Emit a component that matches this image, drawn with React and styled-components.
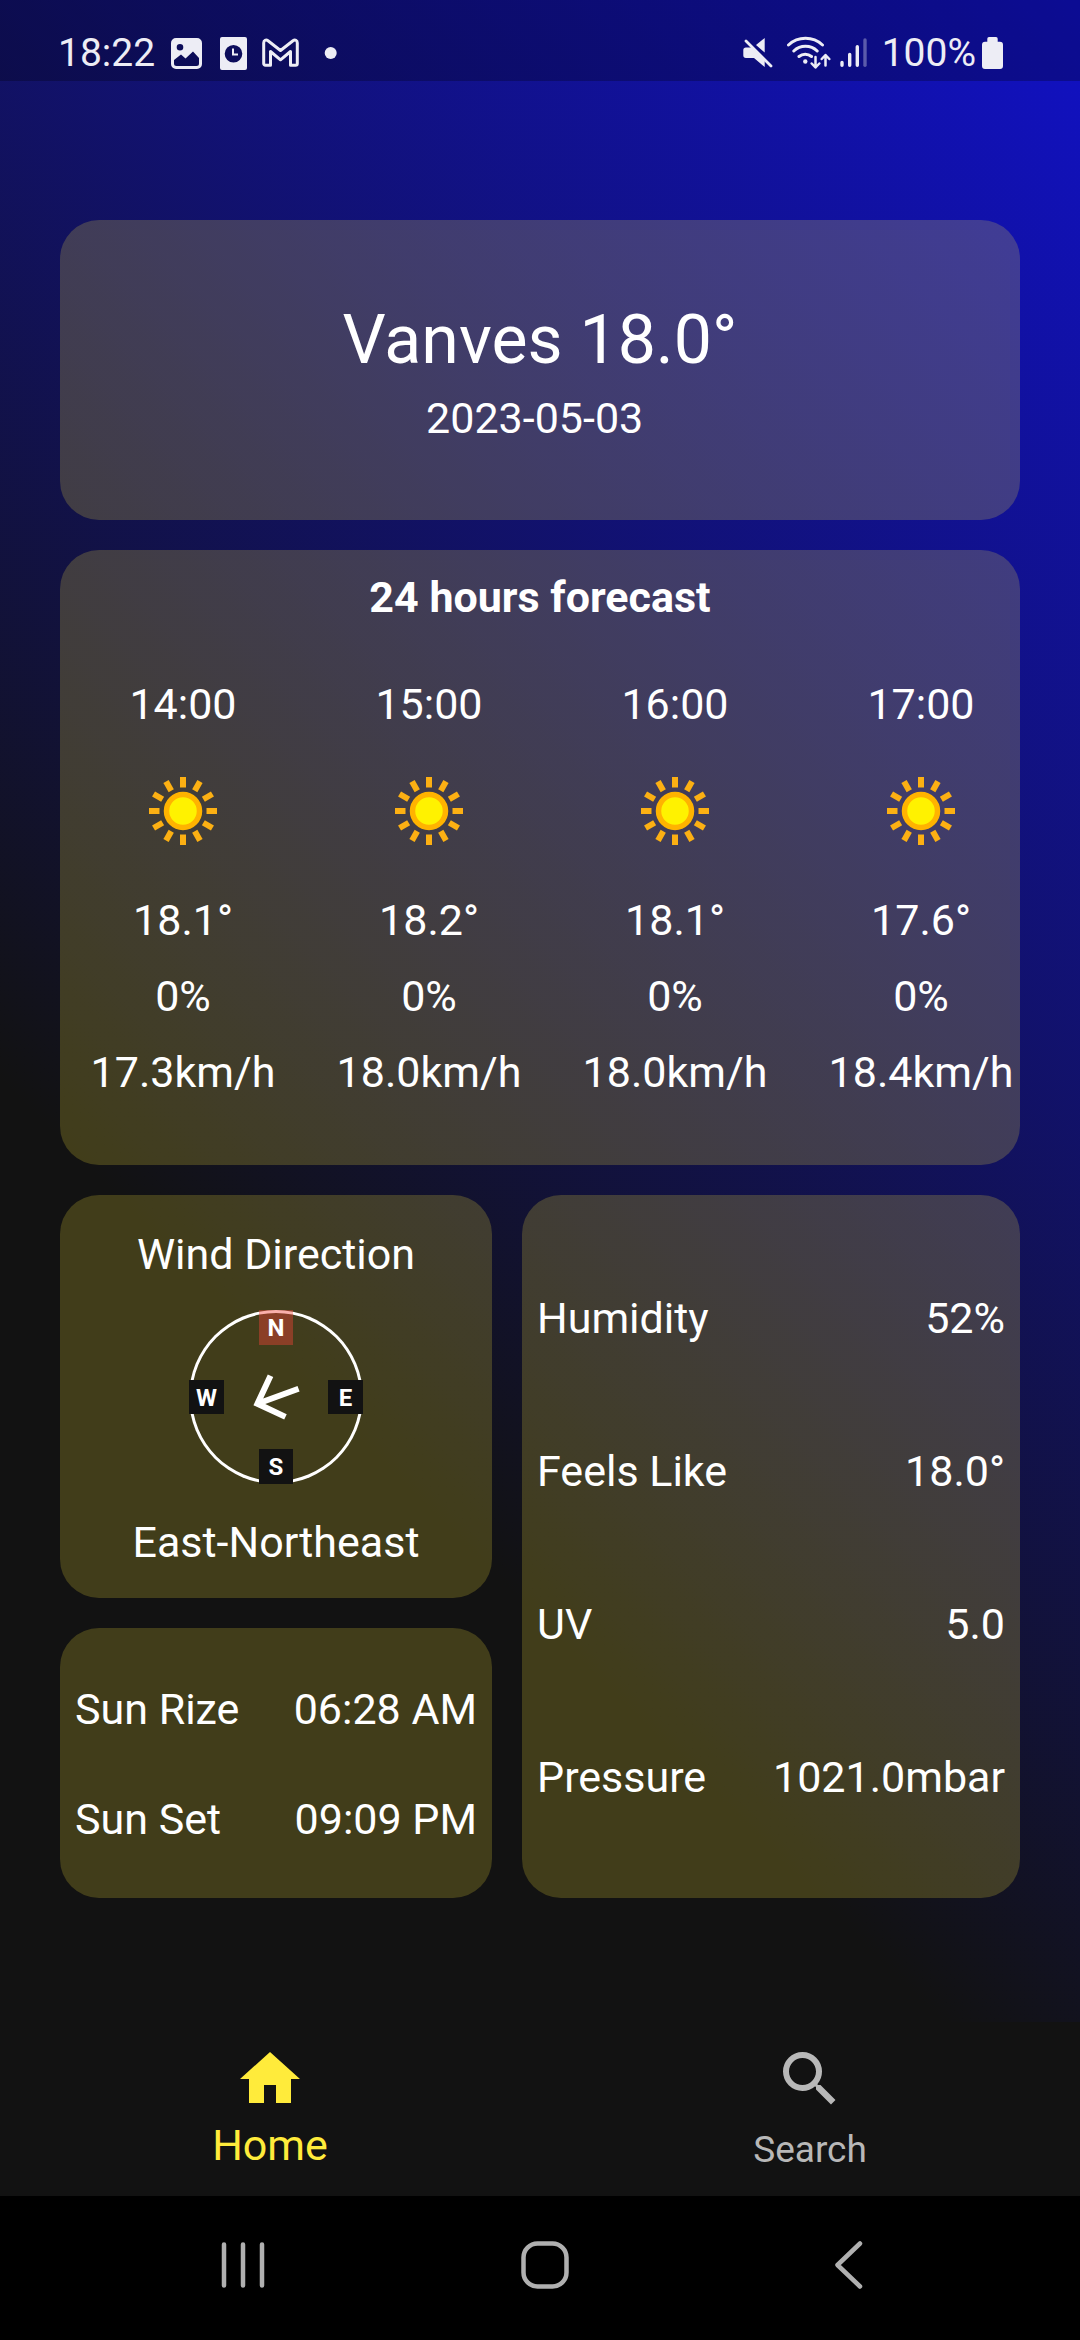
import React from 'react';
import styled, { createGlobalStyle } from 'styled-components';

const GlobalStyle = createGlobalStyle`
  *, *::before, *::after { box-sizing: border-box; }
  body {
    margin: 0;
    background: #000;
    color: #fff;
    font-family: Roboto, "Noto Sans", sans-serif;
    font-size: 43px;
    line-height: 52px;
  }
  h1, h2, p, dl, dt, dd, ul { margin: 0; padding: 0; font-weight: 400; font-size: inherit; }
  ul { list-style: none; }
  svg { display: block; flex: none; }
`;

const Phone = styled.div`
  min-height: 100vh;
  display: flex;
  flex-direction: column;
`;

const Screen = styled.div`
  flex: 1;
  display: flex;
  flex-direction: column;
  background: linear-gradient(225deg, #1111c5 0, #121212 1527px);
`;

const StatusBar = styled.header`
  display: flex;
  justify-content: space-between;
  height: 81px;
  padding: 25px 77px 0 58px;
  background: rgba(0, 0, 0, 0.25);
  color: #ededf5;
  font-size: 39px;
`;

const StatusGroup = styled.div`
  display: flex;
  align-items: center;
  height: 56px;
  gap: ${(p) => p.$gap}px;
`;

const Main = styled.main`
  flex: 1;
  display: flex;
  flex-direction: column;
  gap: 30px;
  padding: 139px 60px 124px;
`;

const Card = styled.section`
  display: flex;
  flex-direction: column;
  border-radius: 39px;
  background: rgba(255, 235, 59, 0.2);
  text-align: center;
`;

const CurrentCard = styled(Card)`
  height: 300px;
  justify-content: center;
  gap: 12px;
  padding-top: 4px;
`;

const Place = styled.h1`
  && {
    font-size: 68px;
    line-height: 80px;
  }
`;

const DateLine = styled.p`
  white-space: pre;
`;

const ForecastCard = styled(Card)`
  padding: 21px 0 67px;
  gap: 55px;
`;

const CardTitle = styled.h2`
  && { font-weight: ${(p) => (p.$bold ? 700 : 400)}; }
`;

const Hours = styled.ul`
  display: grid;
  grid-auto-flow: column;
  grid-auto-columns: 186px;
  gap: 60px;
  && { padding: 0 30px; }
  overflow-x: auto;
  scrollbar-width: none;
`;

const Hour = styled.li`
  display: flex;
  flex-direction: column;
  align-items: center;
  gap: 24px;
  white-space: nowrap;
`;

const HourIcon = styled.div`
  padding: 22px 0 24px;
`;

const Details = styled.div`
  display: grid;
  grid-template-columns: 432fr 498fr;
  gap: 30px;
`;

const Column = styled.div`
  display: flex;
  flex-direction: column;
  gap: 30px;
`;

const WindCard = styled(Card)`
  align-items: center;
  gap: 30px;
  padding: 33px 0 30px;
`;

const Compass = styled.div`
  display: grid;
  grid-template-columns: repeat(5, minmax(0, 1fr));
  grid-template-rows: repeat(5, minmax(0, 1fr));
  width: 174px;
  height: 174px;
  margin-bottom: 2px;
  border-radius: 50%;
  box-shadow: inset 0 0 0 3px #fff;
`;

const Point = styled.span`
  grid-column: ${(p) => p.$col};
  grid-row: ${(p) => p.$row};
  background: ${(p) => (p.$north ? 'rgba(244, 67, 54, 0.42)' : '#121212')};
  font-size: 24px;
  line-height: 37px;
  font-weight: 700;
  text-align: center;
`;

const Needle = styled.svg`
  grid-area: 2 / 2 / 5 / 5;
  place-self: center;
`;

const PairList = styled(Card).attrs({ as: 'dl' })`
  && { padding: ${(p) => p.$pad}px 15px ${(p) => p.$pad - 2}px; }
  justify-content: space-between;
  gap: 58px;
`;

const Pair = styled.div`
  display: flex;
  justify-content: space-between;
  gap: 16px;
  white-space: nowrap;
`;

const TabBar = styled.nav`
  display: grid;
  grid-template-columns: 1fr 1fr;
  background: #121212;
`;

const Tab = styled.a`
  display: flex;
  flex-direction: column;
  align-items: center;
  gap: 5px;
  height: 174px;
  padding-top: 21px;
  color: ${(p) => (p.$active ? '#ffeb3b' : '#b8b8b8')};
  font-size: ${(p) => (p.$active ? 43 : 37)}px;
  line-height: ${(p) => (p.$active ? 50 : 60)}px;
  text-decoration: none;
`;

const SystemBar = styled.footer`
  display: grid;
  grid-template-columns: repeat(3, 1fr);
  height: 144px;
  padding: 0 81px 6px 92px;
  background: #000;
`;

const SystemButton = styled.button`
  display: flex;
  align-items: center;
  justify-content: center;
  border: 0;
  padding: 0;
  background: none;
  color: #b0b0b0;
`;

const hours = [
  { time: '14:00', temp: '18.1°', rain: '0%', wind: '17.3km/h' },
  { time: '15:00', temp: '18.2°', rain: '0%', wind: '18.0km/h' },
  { time: '16:00', temp: '18.1°', rain: '0%', wind: '18.0km/h' },
  { time: '17:00', temp: '17.6°', rain: '0%', wind: '18.4km/h' },
];

const sunTimes = [
  ['Sun Rize', '06:28 AM'],
  ['Sun Set', '09:09 PM'],
];

const readings = [
  ['Humidity', '52%'],
  ['Feels Like', '18.0°'],
  ['UV', '5.0'],
  ['Pressure', '1021.0mbar'],
];

const ImageIcon = () => (
  <svg width="37" height="46" viewBox="0 0 37 46">
    <path
      fill="currentColor"
      fillRule="evenodd"
      d="M8 8h21a5 5 0 0 1 5 5v21a5 5 0 0 1-5 5H8a5 5 0 0 1-5-5V13a5 5 0 0 1 5-5zM12 14a3.3 3.3 0 1 0 0 6.6 3.3 3.3 0 0 0 0-6.6zM6 30l7-5.5 4.5 4L25 21.5l6 6.5v5.5a2.5 2.5 0 0 1-2.500 2.500H8.500a2.500 2.500 0 0 1-2.500-2.500z"
    />
  </svg>
);

const ClockFileIcon = () => (
  <svg width="37" height="46" viewBox="0 0 37 46">
    <path
      fill="currentColor"
      fillRule="evenodd"
      d="M7 7h23a2 2 0 0 1 2 2v29a2 2 0 0 1-2 2H7a2 2 0 0 1-2-2V9a2 2 0 0 1 2-2zM18.500 15a8.800 8.800 0 1 0 0 17.600 8.800 8.800 0 0 0 0-17.600z"
    />
    <path fill="none" stroke="currentColor" strokeWidth="2" d="M18 18.500v6h5" />
  </svg>
);

const MailIcon = () => (
  <svg width="37" height="46" viewBox="0 0 37 46">
    <path
      fill="none"
      stroke="currentColor"
      strokeWidth="3"
      strokeLinejoin="round"
      d="M1.700 33.500V13c0-2.800 2.300-3.800 4.300-2.300L18.500 20.500 31 10.700c2-1.500 4.300-.500 4.300 2.300v20.500c0 1-.700 1.700-1.700 1.700h-5.100V21.500L18.500 29.800 8.500 21.500v13.700H3.400c-1 0-1.700-.700-1.700-1.700z"
    />
  </svg>
);

const DotIcon = () => (
  <svg width="37" height="46" viewBox="0 0 37 46">
    <circle cx="21.700" cy="23" r="6" fill="currentColor" />
  </svg>
);

const MuteIcon = () => (
  <svg width="36" height="46" viewBox="0 0 36 46">
    <path fill="currentColor" d="M21.700 8v14.500L13 15zM3 17.500h6.500l12.200 11V37L11 28H3a2.700 2.700 0 0 1-2.700-2.700v-5A2.700 2.700 0 0 1 3 17.500z" />
    <path stroke="currentColor" strokeWidth="2.800" strokeLinecap="round" d="M3 11l25 25" />
  </svg>
);

const WifiIcon = () => (
  <svg width="44" height="46" viewBox="0 0 44 46" fill="none" stroke="currentColor" strokeWidth="3" strokeLinecap="round">
    <path d="M1.500 15a25 25 0 0 1 34 0M6.800 21a17 17 0 0 1 23.400 0M12 26.500a10 10 0 0 1 12.500 0" />
    <circle cx="18.300" cy="31.500" r="2.200" fill="currentColor" stroke="none" />
    <path strokeWidth="2.500" strokeLinejoin="round" d="M28.500 27v10M24.700 33.500l3.800 4 3.800-4M38.500 35.500v-10M34.700 29l3.800-4 3.800 4" />
  </svg>
);

const SignalIcon = () => (
  <svg width="35" height="46" viewBox="0 0 35 46" stroke="currentColor" strokeWidth="3.400" strokeLinecap="round">
    <path d="M3 32.500v2.700M10.700 24.500v10.700M18.300 16.700v18.500" />
    <path opacity="0.35" d="M26 10v25.200" />
  </svg>
);

const BatteryIcon = () => (
  <svg width="22" height="46" viewBox="0 0 22 46" fill="currentColor">
    <path d="M8 7h7a1.700 1.700 0 0 1 1.700 1.700v3H19a3 3 0 0 1 3 3V36a3 3 0 0 1-3 3H4a3 3 0 0 1-3-3V14.700a3 3 0 0 1 3-3h2.300v-3A1.700 1.700 0 0 1 8 7z" />
  </svg>
);

const SunIcon = () => (
  <svg width="70" height="70" viewBox="-35 -35 70 70" role="img" aria-label="Sunny">
    {Array.from({ length: 12 }, (_, i) => (
      <rect key={i} x="-3" y="-34" width="6" height="10.500" fill="#fcb013" transform={`rotate(${i * 30})`} />
    ))}
    <circle r="16.500" fill="#fff200" stroke="#ffb300" strokeWidth="5.500" />
  </svg>
);

const HomeIcon = () => (
  <svg width="72" height="72" viewBox="0 0 24 24" fill="currentColor">
    <path d="M10 20v-6h4v6h5v-8h3L12 3 2 12h3v8z" />
  </svg>
);

const SearchIcon = () => (
  <svg width="72" height="72" viewBox="0 0 24 24" fill="currentColor">
    <path d="M15.500 14h-.790l-.280-.270A6.471 6.471 0 0 0 16 9.500 6.500 6.500 0 1 0 9.500 16c1.610 0 3.090-.590 4.230-1.570l.270.280v.790l5 4.990L20.490 19l-4.990-5zm-6 0C7.010 14 5 11.990 5 9.500S7.010 5 9.500 5 14 7.010 14 9.500 11.990 14 9.500 14z" />
  </svg>
);

export default function App() {
  return (
    <Phone>
      <GlobalStyle />
      <Screen>
        <StatusBar>
          <StatusGroup $gap={13}>
            <time>18:22</time>
            <StatusGroup $gap={10}>
              <ImageIcon />
              <ClockFileIcon />
              <MailIcon />
              <DotIcon />
            </StatusGroup>
          </StatusGroup>
          <StatusGroup $gap={8}>
            <MuteIcon />
            <WifiIcon />
            <SignalIcon />
            <StatusGroup $gap={5}>
              <span>100%</span>
              <BatteryIcon />
            </StatusGroup>
          </StatusGroup>
        </StatusBar>

        <Main>
          <CurrentCard>
            <Place>Vanves 18.0°</Place>
            <DateLine>{'2023-05-03 '}</DateLine>
          </CurrentCard>

          <ForecastCard>
            <CardTitle $bold>24 hours forecast</CardTitle>
            <Hours>
              {hours.map((h) => (
                <Hour key={h.time}>
                  <span>{h.time}</span>
                  <HourIcon>
                    <SunIcon />
                  </HourIcon>
                  <span>{h.temp}</span>
                  <span>{h.rain}</span>
                  <span>{h.wind}</span>
                </Hour>
              ))}
            </Hours>
          </ForecastCard>

          <Details>
            <Column>
              <WindCard>
                <CardTitle>Wind Direction</CardTitle>
                <Compass>
                  <Point $north $col={3} $row={1}>N</Point>
                  <Point $col={1} $row={3}>W</Point>
                  <Point $col={5} $row={3}>E</Point>
                  <Point $col={3} $row={5}>S</Point>
                  <Needle width="72" height="72" viewBox="0 0 24 24" aria-hidden="true">
                    <path
                      fill="#fff"
                      transform="rotate(-20 12 12)"
                      d="M20 11H7.830l5.590-5.590L12 4l-8 8 8 8 1.410-1.410L7.830 13H20v-2z"
                    />
                  </Needle>
                </Compass>
                <p>East-Northeast</p>
              </WindCard>
              <PairList $pad={55}>
                {sunTimes.map(([label, value]) => (
                  <Pair key={label}>
                    <dt>{label}</dt>
                    <dd>{value}</dd>
                  </Pair>
                ))}
              </PairList>
            </Column>
            <PairList $pad={97}>
              {readings.map(([label, value]) => (
                <Pair key={label}>
                  <dt>{label}</dt>
                  <dd>{value}</dd>
                </Pair>
              ))}
            </PairList>
          </Details>
        </Main>
      </Screen>

      <TabBar>
        <Tab href="#home" $active aria-current="page">
          <HomeIcon />
          Home
        </Tab>
        <Tab href="#search">
          <SearchIcon />
          Search
        </Tab>
      </TabBar>

      <SystemBar>
        <SystemButton type="button" aria-label="Recent apps">
          <svg width="48" height="48" viewBox="0 0 48 48" stroke="currentColor" strokeWidth="4.500" strokeLinecap="round">
            <path d="M5 3.500v41M24 3.500v41M43 3.500v41" />
          </svg>
        </SystemButton>
        <SystemButton type="button" aria-label="Home screen">
          <svg width="48" height="48" viewBox="0 0 48 48" fill="none" stroke="currentColor" strokeWidth="4.500">
            <rect x="2.500" y="2.500" width="43" height="43" rx="14" />
          </svg>
        </SystemButton>
        <SystemButton type="button" aria-label="Back">
          <svg width="48" height="48" viewBox="0 0 48 48" fill="none" stroke="currentColor" strokeWidth="4.500" strokeLinecap="round" strokeLinejoin="round">
            <path d="M36 2.500L13.500 24 36 45.500" />
          </svg>
        </SystemButton>
      </SystemBar>
    </Phone>
  );
}
